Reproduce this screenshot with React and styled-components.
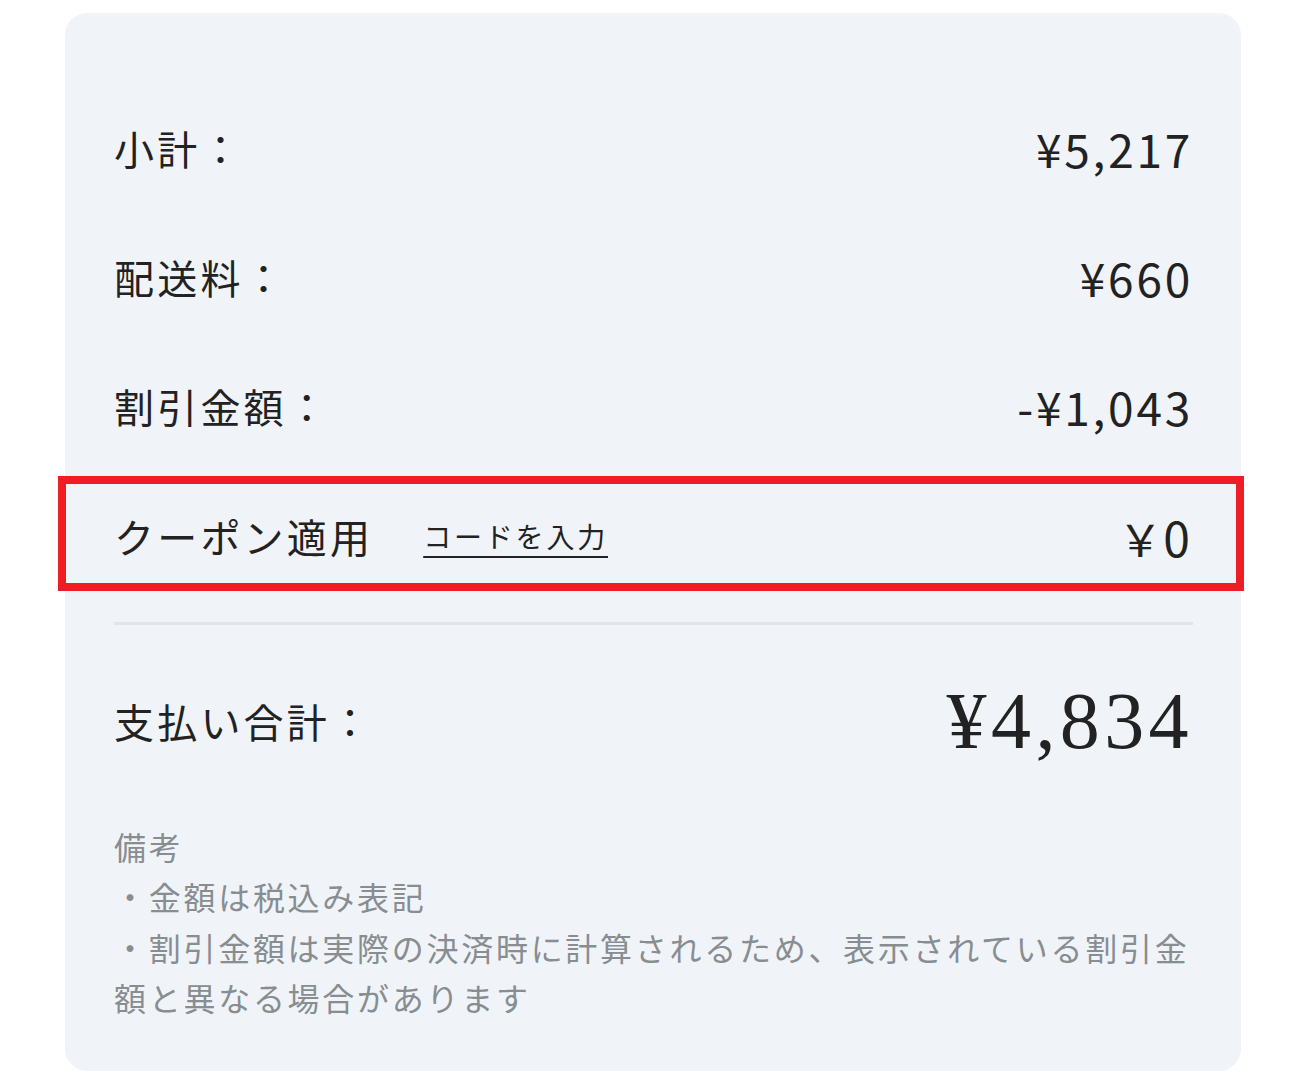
import styled, { createGlobalStyle } from "styled-components";

const GlobalStyle = createGlobalStyle`
  body {
    margin: 0;
    background: #ffffff;
    font-family: "Noto Sans CJK JP", "Noto Sans", sans-serif;
    color: #222222;
  }
`;

const Card = styled.div`
  width: 1176px;
  margin: 13px 0 0 65px;
  padding: 70px 48px 48px 49px;
  box-sizing: border-box;
  background: #f0f4f8;
  border-radius: 22px;
`;

const Row = styled.div`
  display: flex;
  align-items: center;
  justify-content: space-between;
  height: 129px;
`;

const CouponRow = styled.div`
  display: flex;
  align-items: center;
  height: 95px;
  margin: 6px -51px 0 -56px;
  padding: 4px 46px 0 48px;
  border: 8px solid #ee1c25;
`;

const Label = styled.span`
  font-size: 40px;
  letter-spacing: 0.08em;
  line-height: 1;
`;

const Value = styled.span`
  font-size: ${(p) => (p.$big ? "48px" : "46px")};
  line-height: 1;
  letter-spacing: ${(p) => (p.$big ? "0" : "0.06em")};
`;

const Yen = styled.span`
  font-size: 44px;
  margin-right: 1px;
`;

const CodeLink = styled.a`
  margin-left: 50px;
  font-size: 28px;
  letter-spacing: 0.1em;
  color: #222222;
  text-decoration: underline;
  text-decoration-thickness: 2px;
  text-underline-offset: 8px;
  cursor: pointer;
`;

const Spacer = styled.div`
  flex: 1;
`;

const Divider = styled.hr`
  margin: 31px 0 0 0;
  border: none;
  height: 3px;
  background: #e1e5ea;
`;

const TotalRow = styled(Row)`
  height: 192px;
`;

const TotalValue = styled.span`
  font-family: "Liberation Serif", "Times New Roman", serif;
  font-size: 80px;
  letter-spacing: 0.055em;
  line-height: 1;
`;

const Notes = styled.div`
  margin-top: 4px;
  font-size: 32px;
  line-height: 50.4px;
  letter-spacing: 0.085em;
  color: #878d91;
`;

const rows = [
  { label: "小計：", value: "¥5,217" },
  { label: "配送料：", value: "¥660" },
  { label: "割引金額：", value: "-¥1,043" },
];

export default function App() {
  return (
    <>
      <GlobalStyle />
      <Card>
        {rows.map((r) => (
          <Row key={r.label}>
            <Label>{r.label}</Label>
            <Value>{r.value}</Value>
          </Row>
        ))}
        <CouponRow>
          <Label>クーポン適用</Label>
          <CodeLink>コードを入力</CodeLink>
          <Spacer />
          <Value $big>
            <Yen>￥</Yen>0
          </Value>
        </CouponRow>
        <Divider />
        <TotalRow>
          <Label>支払い合計：</Label>
          <TotalValue>¥4,834</TotalValue>
        </TotalRow>
        <Notes>
          備考
          <br />
          ・金額は税込み表記
          <br />
          ・割引金額は実際の決済時に計算されるため、表示されている割引金額と異なる場合があります
        </Notes>
      </Card>
    </>
  );
}
